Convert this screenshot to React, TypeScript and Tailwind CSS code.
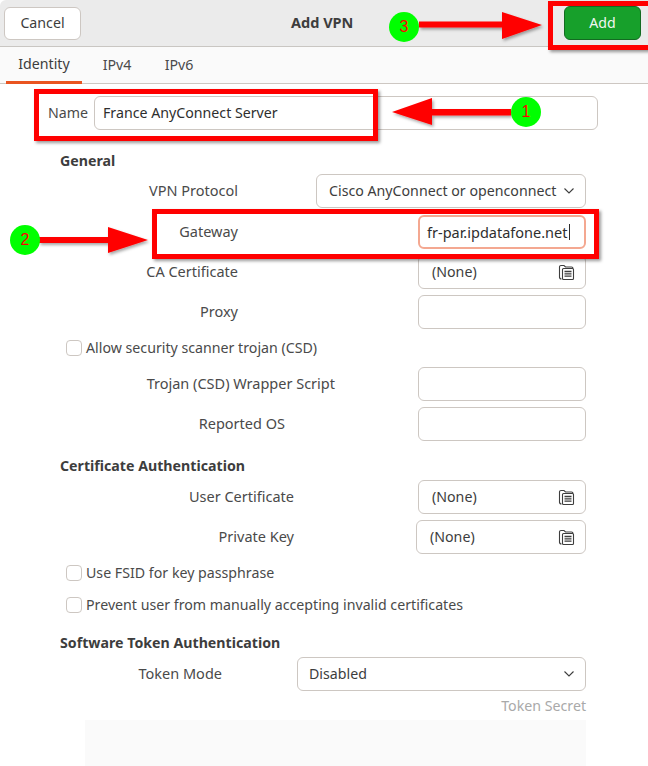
const FONT = "font-['Noto_Sans','Open_Sans',sans-serif]";

function FileIcon() {
  return (
    <svg width="17" height="17" viewBox="0 0 17 17" fill="none" stroke="#3d3d3d" strokeWidth="1.1" className="shrink-0">
      <path d="M1.500 13.500V3a1.500 1.500 0 0 1 1.500-1.500h3l1.500 1.500h6a1.500 1.500 0 0 1 1.500 1.500" />
      <path d="M1.500 13a2 2 0 0 0 2 2" />
      <rect x="4.500" y="4.500" width="11" height="11" rx="1" />
      <path d="M6.500 7.500h7M6.500 9.800h7M6.500 12.100h7" strokeWidth="1.300" />
    </svg>
  );
}

function Chevron() {
  return (
    <svg width="12" height="8" viewBox="0 0 12 8" fill="none" stroke="#3d3d3d" strokeWidth="1.1" className="shrink-0">
      <path d="M1.500 1.500 6 6l4.500-4.500" />
    </svg>
  );
}

function Label({ right, children }: { right: number; children: string }) {
  return (
    <div className="shrink-0 text-right whitespace-nowrap text-[14.5px]" style={{ width: right - 60 }}>
      {children}
    </div>
  );
}

function Row({ label, right, left, mt, children }: { label: string; right: number; left: number; mt: number; children?: React.ReactNode }) {
  return (
    <div className="flex items-center h-[34px]" style={{ marginTop: mt }}>
      <Label right={right}>{label}</Label>
      <div
        className="ml-auto h-full bg-white border border-[#cdc7c2] rounded-[6px] flex items-center justify-between pl-[12px] pr-[10px] text-[#3d3d3d]"
        style={{ width: 586 - left }}
      >
        {children}
      </div>
    </div>
  );
}

function Check({ label, mt }: { label: string; mt: number }) {
  return (
    <div className="flex items-center h-[18px] ml-[6px] gap-[4px]" style={{ marginTop: mt }}>
      <div className="w-[16px] h-[16px] bg-white border border-[#cdc7c2] rounded-[4px]" />
      <span>{label}</span>
    </div>
  );
}

function Heading({ children, mt }: { children: string; mt: number }) {
  return (
    <div className="font-bold text-[#3d3d3d] h-[20px] leading-[20px]" style={{ marginTop: mt }}>
      {children}
    </div>
  );
}

function Badge({ n, x, y }: { n: string; x: number; y: number }) {
  return (
    <div
      className="absolute w-[30px] h-[30px] rounded-full bg-[#00ff00] text-[#ff0000] text-[16px] flex items-center justify-center font-['Liberation_Sans',sans-serif]"
      style={{ left: x - 15, top: y - 15 }}
    >
      {n}
    </div>
  );
}

function Box({ x, y, r, b }: { x: number; y: number; r: number; b: number }) {
  return (
    <div
      className="absolute border-[5px] border-[#ff0000] shadow-[2px_2px_3px_rgba(0,0,0,0.4)]"
      style={{ left: x, top: y, width: r - x, height: b - y }}
    />
  );
}

function Arrows() {
  return (
    <svg width="648" height="766" className="absolute left-0 top-0 pointer-events-none">
      <defs>
        <filter id="s" x="-10%" y="-30%" width="120%" height="170%">
          <feDropShadow dx="1.500" dy="2" stdDeviation="1.500" floodOpacity="0.35" />
        </filter>
      </defs>
      <g fill="#ff0000" filter="url(#s)">
        <path d="M419 21.500h83V12l40 13-40 14V27.500h-83z" />
        <path d="M511 109v6.500h-79V125l-40-13 40-14v11z" />
        <path d="M39 237h69v-10l40 13-40 13v-10H39z" />
      </g>
    </svg>
  );
}

export default function App() {
  return (
    <div className={`relative w-[648px] h-[766px] overflow-hidden bg-white text-[14.2px] text-[#4a4a4a] ${FONT}`}>
      <header className="h-[47px] bg-[#ebebeb] border-b border-[#c9c6c2] rounded-tl-[6px] flex items-center justify-between pl-[4px] pr-[7px] relative">
        <button className="w-[77px] h-[33px] bg-white border border-[#cdc7c2] rounded-[6px] text-[#3d3d3d]">Cancel</button>
        <div className="absolute left-[291px] top-[12px] font-bold text-[#3d3d3d] text-[14.5px]">Add VPN</div>
        <button className="w-[77px] h-[34px] bg-[#17a02b] border border-[#136b22] rounded-[6px] text-[#f1f5f0]">Add</button>
      </header>
      <nav className="h-[37px] bg-[#fafafa] border-b border-[#cdc7c2] flex pl-[6px] gap-[14px]">
        <div className="w-[76px] h-[37px] border-b-[3px] border-[#e95420] flex items-center justify-center text-[#3d3d3d]">Identity</div>
        <div className="flex items-center w-[42px] justify-center">IPv4</div>
        <div className="flex items-center w-[42px] justify-center ml-[6px]">IPv6</div>
      </nav>

      <main className="pl-[60px] pr-[62px]">
        <div className="flex items-center h-[34px] mt-[12px] -ml-[12px] -mr-[12px]">
          <span className="w-[46px] shrink-0">Name</span>
          <div className="flex-1 h-full border border-[#cdc7c2] rounded-[6px] pl-[8px] flex items-center text-[#2e2e2e]">France AnyConnect Server</div>
        </div>

        <Heading mt={21}>General</Heading>
        <Row label="VPN Protocol" right={238} left={316} mt={3}>
          <span className="whitespace-nowrap">Cisco AnyConnect or openconnect</span>
          <Chevron />
        </Row>
        <div className="flex items-center h-[34px] mt-[7px]">
          <Label right={238}>Gateway</Label>
          <div className="ml-auto w-[168px] h-full bg-white border-2 border-[#f4a891] rounded-[6px] flex items-center pl-[7px]">
            <span className="text-[#2e2e2e] text-[14.5px] whitespace-nowrap border-r border-[#2e2e2e] pr-[1px] leading-[16px]">fr-par.ipdatafone.net</span>
          </div>
        </div>
        <Row label="CA Certificate" right={238} left={418} mt={6}>
          <span className="ml-[1px]">(None)</span>
          <FileIcon />
        </Row>
        <Row label="Proxy" right={238} left={418} mt={6} />
        <Check label="Allow security scanner trojan (CSD)" mt={10} />
        <Row label="Trojan (CSD) Wrapper Script" right={335} left={418} mt={10} />
        <Row label="Reported OS" right={285} left={418} mt={6} />

        <Heading mt={15}>Certificate Authentication</Heading>
        <Row label="User Certificate" right={294} left={418} mt={4}>
          <span className="ml-[1px]">(None)</span>
          <FileIcon />
        </Row>
        <Row label="Private Key" right={294} left={416} mt={6}>
          <span className="ml-[1px]">(None)</span>
          <FileIcon />
        </Row>
        <Check label="Use FSID for key passphrase" mt={10} />
        <Check label="Prevent user from manually accepting invalid certificates" mt={14} />

        <Heading mt={19}>Software Token Authentication</Heading>
        <Row label="Token Mode" right={222} left={297} mt={4}>
          <span className="-ml-[1px]">Disabled</span>
          <Chevron />
        </Row>
        <div className="text-right text-[#a9a9a9] h-[20px] leading-[20px] mt-[5px]">Token Secret</div>
        <div className="ml-[25px] mt-[4px] h-[46px] bg-[#fafafa]" />
      </main>

      <Arrows />
      <Box x={34} y={89} r={378} b={141} />
      <Box x={152} y={209} r={599} b={259} />
      <Box x={548} y={1} r={660} b={50} />
      <Badge n="1" x={526} y={112} />
      <Badge n="2" x={25} y={240} />
      <Badge n="3" x={404} y={27} />
    </div>
  );
}
